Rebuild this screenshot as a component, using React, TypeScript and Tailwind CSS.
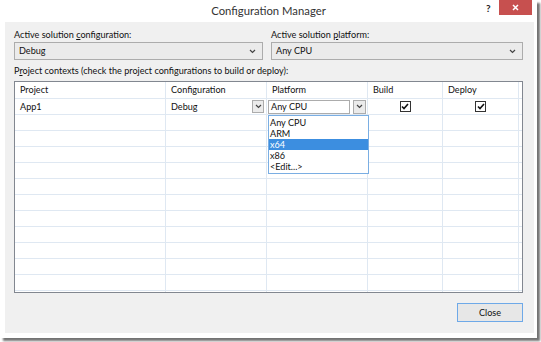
import React from "react";

const COLS = [151, 101, 101, 75, 76];
const PLATFORMS = ["Any CPU", "ARM", "x64", "x86", "<Edit...>"];

function Chevron({ className = "" }: { className?: string }) {
  return (
    <svg width="7" height="5" viewBox="0 0 7 5" className={className}>
      <path d="M1 1 L3.5 3.5 L6 1" fill="none" stroke="#444" strokeWidth="1.2" />
    </svg>
  );
}

function Select({ value }: { value: string }) {
  return (
    <div className="h-[18px] flex items-center justify-between border border-[#acacac] bg-[#ebebeb] pl-[4px] pr-[6px]">
      <span>{value}</span>
      <Chevron />
    </div>
  );
}

function Check() {
  return (
    <div className="w-[11px] h-[11px] border border-[#333] bg-white flex items-center justify-center">
      <svg width="8" height="7" viewBox="0 0 8 7">
        <path d="M1 3.5 L3 5.5 L7 1" fill="none" stroke="#111" strokeWidth="1.6" />
      </svg>
    </div>
  );
}

export default function App() {
  const font = { fontFamily: "Lato, 'Noto Sans', sans-serif" };
  return (
    <div className="w-[541px] h-[342px] bg-white relative overflow-hidden text-[#111] text-[9.1px]" style={font}>
      <div className="w-[537px] h-[338px] bg-white flex flex-col shadow-[3px_3px_2px_rgba(0,0,0,0.55)]">
        {/* title bar */}
        <div className="h-[22px] flex items-start relative">
          <div className="flex-1 text-center text-[11.3px] text-[#333] pt-[3px]">Configuration Manager</div>
          <span className="absolute left-[486px] top-[1px] text-[10px] font-bold text-[#222]">?</span>
          <div className="absolute left-[499px] top-0 w-[33px] h-[15px] bg-[#c7504f] flex items-center justify-center">
            <svg width="7" height="7" viewBox="0 0 7 7">
              <path d="M1 1 L6 6 M6 1 L1 6" stroke="white" strokeWidth="1.5" />
            </svg>
          </div>
        </div>

        {/* body */}
        <div className="ml-[5px] w-[529px] h-[311px] bg-[#f0f0f0] pl-[9px] pr-[11px] pt-[5px] flex flex-col">
          <div className="flex gap-[8px]">
            <div className="w-[249px] flex flex-col">
              <div className="h-[15px] leading-[15px]">
                Active solution <span className="underline">c</span>onfiguration:
              </div>
              <Select value="Debug" />
            </div>
            <div className="w-[252px] flex flex-col">
              <div className="h-[15px] leading-[15px]">
                Active solution <span className="underline">p</span>latform:
              </div>
              <Select value="Any CPU" />
            </div>
          </div>
          <div className="h-[20px] leading-[20px] mt-[1px]">
            P<span className="underline">r</span>oject contexts (check the project configurations to build or deploy):
          </div>

          {/* table */}
          <div className="h-[212px] border border-[#828790] bg-white relative overflow-hidden">
            <div className="flex h-[17px] border-b border-[#dfe8f2]">
              {["Project", "Configuration", "Platform", "Build", "Deploy"].map((h, i) => (
                <div key={h} className="border-r border-[#dfe8f2] pl-[5px] flex items-center" style={{ width: COLS[i] }}>
                  {h}
                </div>
              ))}
            </div>
            <div className="flex h-[16px] border-b border-[#dfe8f2]">
              <div className="border-r border-[#dfe8f2] pl-[5px] flex items-center" style={{ width: COLS[0] }}>App1</div>
              <div className="border-r border-[#dfe8f2] pl-[5px] pr-[2px] flex items-center justify-between" style={{ width: COLS[1] }}>
                <span>Debug</span>
                <div className="w-[12px] h-[13px] border border-[#acacac] bg-[#ebebeb] flex items-center justify-center">
                  <Chevron />
                </div>
              </div>
              <div className="border-r border-[#dfe8f2] pl-[1px] pr-[1px] flex items-center gap-[3px]" style={{ width: COLS[2] }}>
                <div className="w-[82px] h-[14px] border border-[#acacac] pl-[2px] flex items-center">Any CPU</div>
                <div className="w-[13px] h-[14px] border border-[#acacac] bg-[#ebebeb] flex items-center justify-center">
                  <Chevron />
                </div>
              </div>
              <div className="border-r border-[#dfe8f2] flex items-center justify-center" style={{ width: COLS[3] }}>
                <Check />
              </div>
              <div className="border-r border-[#dfe8f2] flex items-center justify-center" style={{ width: COLS[4] }}>
                <Check />
              </div>
            </div>
            {Array.from({ length: 12 }).map((_, r) => (
              <div key={r} className="flex h-[16px] border-b border-[#dfe8f2]">
                {COLS.map((w, i) => (
                  <div key={i} className="border-r border-[#dfe8f2]" style={{ width: w }} />
                ))}
              </div>
            ))}

            {/* open dropdown list */}
            <div className="absolute left-[253px] top-[33px] w-[101px] border border-[#7aaee3] bg-white flex flex-col py-[1px]">
              {PLATFORMS.map((p) => (
                <div
                  key={p}
                  className={`h-[11px] leading-[11px] pl-[1px] ${p === "x64" ? "bg-[#3c8ee0] text-white" : ""}`}
                >
                  {p}
                </div>
              ))}
            </div>
          </div>

          <div className="flex justify-end mt-[10px]">
            <div className="w-[66px] h-[19px] border border-[#6ea9e8] bg-[#e7e7e7] flex items-center justify-center">
              Close
            </div>
          </div>
        </div>
      </div>
    </div>
  );
}
